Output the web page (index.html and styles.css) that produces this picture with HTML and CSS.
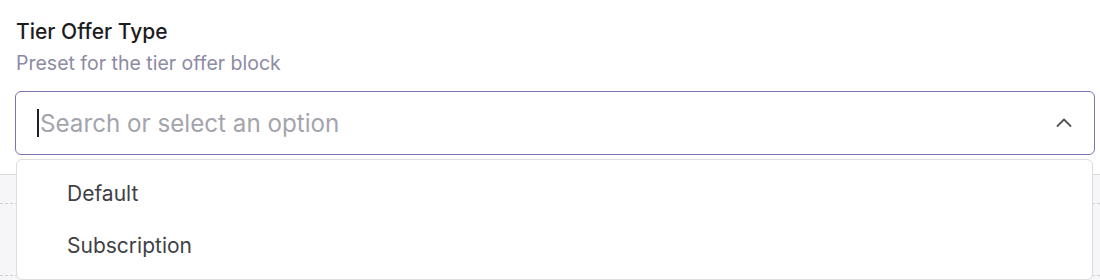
FILE: index.html
```html
<!DOCTYPE html>
<html lang="en">
<head>
  <meta charset="UTF-8">
  <title>Tier Offer Type</title>
  <link rel="stylesheet" href="styles.css">
</head>
<body>
  <div class="field">
    <div class="field-label">Tier Offer Type</div>
    <div class="field-help">Preset for the tier offer block</div>

    <div class="select">
      <div class="select-control">
        <span class="caret"></span>
        <span class="placeholder">Search or select an option</span>
        <svg class="chevron" width="16" height="16" viewBox="0 0 16 16">
          <path d="M1.5 11 L8 4.5 L14.5 11" fill="none" stroke="#555" stroke-width="1.8" stroke-linecap="round" stroke-linejoin="round"/>
        </svg>
      </div>
      <ul class="select-menu">
        <li>Default</li>
        <li>Subscription</li>
      </ul>
    </div>
  </div>

  <div class="panel">
    <div class="panel-row"></div>
    <div class="panel-row tall"></div>
  </div>
</body>
</html>
```

FILE: styles.css
```css
* {
  margin: 0;
  padding: 0;
  box-sizing: border-box;
}

body {
  font-family: 'Inter', 'Noto Sans', sans-serif;
  background: #fff;
  width: 1100px;
  height: 280px;
  overflow: hidden;
}

.field {
  padding: 20px 5px 0 16px;
}

.field-label {
  font-size: 21px;
  font-weight: 500;
  line-height: 24px;
  color: #1c1c1f;
}

.field-help {
  margin-top: 8px;
  font-size: 19.5px;
  line-height: 22px;
  color: #8c8ba3;
}

.select {
  position: relative;
  margin-top: 17px;
  margin-left: -1px;
}

.select-control {
  height: 64px;
  border: 1.5px solid #7a75b2;
  border-radius: 6px;
  display: flex;
  align-items: center;
  padding: 0 22px 0 21px;
  background: #fff;
}

.caret {
  width: 2px;
  height: 28px;
  background: #1f1f2a;
  margin-right: 1px;
}

.placeholder {
  flex: 1;
  font-size: 24.2px;
  color: #a4a4ad;
}

.select-menu {
  position: absolute;
  top: 68px;
  left: 1px;
  right: 2px;
  list-style: none;
  background: #fff;
  border: 1px solid #dcdce1;
  border-radius: 6px;
  padding: 8px 0 7px;
  z-index: 2;
}

.select-menu li {
  height: 52px;
  line-height: 52px;
  padding-left: 50px;
  font-size: 21px;
  color: #3f3f46;
}

.panel {
  margin-top: 19px;
  height: 120px;
  border-top: 1px solid #dadadf;
  background: #f6f6f9;
}

.panel-row {
  height: 29px;
  border-bottom: 1px dashed #cfcfd6;
}

.panel-row.tall {
  height: 72px;
}
```
